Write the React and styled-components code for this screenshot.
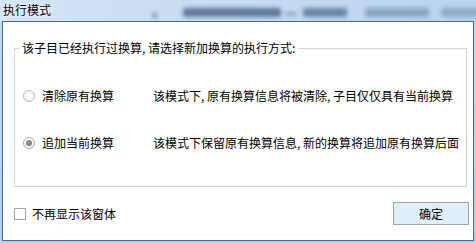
import React, { useState } from "react";
import styled, { createGlobalStyle } from "styled-components";

const GlobalStyle = createGlobalStyle`
  html, body {
    margin: 0;
    padding: 0;
    background: #bcd3ea;
  }
  body {
    font-family: "Noto Sans CJK SC", "Noto Sans", sans-serif;
    font-size: 12px;
    color: #000;
  }
`;

const Window = styled.div`
  width: 476px;
  height: 243px;
  display: flex;
  flex-direction: column;
  background: linear-gradient(180deg, #c4daf0 0%, #b7cfe8 100%);
  overflow: hidden;
`;

const TitleBar = styled.div`
  height: 21px;
  flex: none;
  display: flex;
  align-items: center;
  padding-left: 3px;
  background: linear-gradient(90deg, #d3e5f6 0%, #c8ddf2 40%, #b9d4ef 100%);
  overflow: hidden;
`;

const Title = styled.span`
  width: 49px;
  flex: none;
  line-height: 14px;
  padding-bottom: 2px;
  text-shadow: 0 0 6px #fff, 0 0 3px #fff;
`;

const Backdrop = styled.div`
  display: flex;
  align-items: center;
  margin-left: 100px;
  padding-top: 4px;
  filter: blur(2px);
`;

const Blob = styled.span`
  width: ${(p) => p.$w}px;
  height: ${(p) => p.$h || 9}px;
  margin-left: ${(p) => p.$ml || 0}px;
  margin-top: ${(p) => p.$mt || 0}px;
  flex: none;
  background: ${(p) => p.$c || "#7f97b3"};
  opacity: ${(p) => p.$o || 0.85};
  border-radius: 2px;
`;

const Client = styled.div`
  height: 218px;
  margin: 0 2px;
  border: 1px solid #55667a;
  background: #fff;
  display: flex;
  flex-direction: column;
`;

const Group = styled.fieldset`
  width: 451px;
  height: 144px;
  margin: 19px 0 0 11px;
  padding: 0;
  border: 1px solid #d5d5d5;
  box-sizing: content-box;
  min-inline-size: 0;
`;

const Legend = styled.legend`
  margin-left: 4px;
  padding: 0 3px;
  line-height: 14px;
  height: 14px;
`;

const Options = styled.div`
  display: flex;
  flex-direction: column;
  gap: 27px;
  padding: 31px 0 0 8px;
`;

const OptionRow = styled.label`
  display: grid;
  grid-template-columns: 12px 104px auto;
  column-gap: 7px;
  align-items: center;
  height: 20px;
  line-height: 14px;
  white-space: nowrap;
`;

const Radio = styled.span`
  width: 10px;
  height: 10px;
  border-radius: 50%;
  border: 1px solid ${(p) => (p.$checked ? "#a9a9a9" : "#b8b8b8")};
  background: radial-gradient(circle at 50% 40%, #ffffff 0%, #f0f0f0 100%);
  display: flex;
  align-items: center;
  justify-content: center;
  &::after {
    content: "";
    display: ${(p) => (p.$checked ? "block" : "none")};
    width: 6px;
    height: 6px;
    border-radius: 50%;
    background: radial-gradient(circle at 45% 40%, #9a9a9a 0%, #7b7b7b 70%, #a0a0a0 100%);
  }
`;

const Desc = styled.span``;

const Footer = styled.div`
  display: flex;
  align-items: center;
  justify-content: space-between;
  margin-top: 15px;
  padding: 0 4px 0 11px;
  height: 23px;
`;

const CheckLabel = styled.label`
  display: flex;
  align-items: center;
  gap: 6px;
  line-height: 14px;
  padding-top: 1px;
`;

const CheckBox = styled.span`
  width: 10px;
  height: 10px;
  border: 1px solid #a3a3a3;
  background: #fff;
`;

const Button = styled.button`
  width: 76px;
  height: 23px;
  padding: 0;
  border: 1px solid #a0a0a0;
  background: #e1eff8;
  font: inherit;
  color: #000;
  line-height: 14px;
`;

const options = [
  {
    name: "清除原有换算",
    desc: "该模式下, 原有换算信息将被清除, 子目仅仅具有当前换算",
  },
  {
    name: "追加当前换算",
    desc: "该模式下保留原有换算信息, 新的换算将追加原有换算后面",
  },
];

export default function App() {
  const [mode, setMode] = useState(1);

  return (
    <>
      <GlobalStyle />
      <Window>
        <TitleBar>
          <Title>执行模式</Title>
          <Backdrop>
            <Blob $w={5} $h={5} $mt={6} $c="#4f6784" $o={0.7} />
            <Blob $w={98} $ml={26} $c="#4d6688" />
            <Blob $w={12} $h={4} $ml={4} $mt={3} $c="#6c84a3" $o={0.6} />
            <Blob $w={44} $ml={6} $c="#5d7698" />
            <Blob $w={64} $ml={18} $c="#7a93b2" $o={0.75} />
            <Blob $w={44} $ml={12} $c="#7f98b6" $o={0.7} />
          </Backdrop>
        </TitleBar>
        <Client>
          <Group>
            <Legend>该子目已经执行过换算, 请选择新加换算的执行方式:</Legend>
            <Options>
              {options.map((opt, i) => (
                <OptionRow key={i} onClick={() => setMode(i)}>
                  <Radio $checked={mode === i} />
                  <span>{opt.name}</span>
                  <Desc>{opt.desc}</Desc>
                </OptionRow>
              ))}
            </Options>
          </Group>
          <Footer>
            <CheckLabel>
              <CheckBox />
              不再显示该窗体
            </CheckLabel>
            <Button>确定</Button>
          </Footer>
        </Client>
      </Window>
    </>
  );
}
